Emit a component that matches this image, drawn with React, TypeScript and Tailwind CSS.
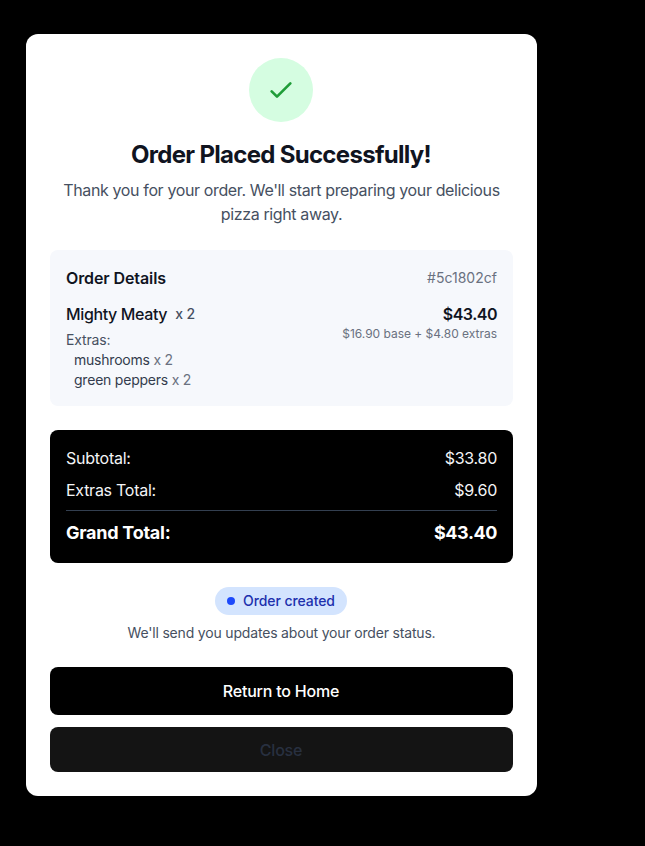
import React from "react";

function Row({ label, value }: { label: string; value: string }) {
  return (
    <div className="flex justify-between text-[#f3f4f6]">
      <span className="tracking-[-0.26px]">{label}</span>
      <span className="tracking-[-0.26px]">{value}</span>
    </div>
  );
}

export default function App() {
  return (
    <div className="h-[846px] w-[645px] overflow-hidden bg-black pl-[26px] pt-[34px] font-['Inter',sans-serif] text-base tracking-[-0.176px]">
      <div className="h-[762px] w-[511px] rounded-xl bg-white p-6">
        <div className="text-center">
          <div className="ml-[199px] flex size-16 items-center justify-center rounded-full bg-[#d5fde1]">
            <svg className="size-8 text-[#1f9d38]" fill="none" stroke="currentColor" strokeWidth="2" strokeLinecap="round" strokeLinejoin="round" viewBox="0 0 24 24">
              <path d="M5 13l4 4L19 7" />
            </svg>
          </div>
          <h2 className="mb-[7px] mt-[17px] pr-px text-2xl font-bold tracking-[-0.7px] text-[#10141f]">Order Placed Successfully!</h2>
          <p className="tracking-[-0.37px] text-[#465061]">Thank you for your order. We'll start preparing your delicious pizza right away.</p>
        </div>

        <div className="mt-6 h-[156px] rounded-lg bg-[#f6f8fc] p-4">
          <div className="mb-3 flex items-center justify-between">
            <h3 className="font-semibold tracking-[-0.1px] text-[#10141f]">Order Details</h3>
            <span className="text-sm tracking-[0.02px] text-[#6a7180]">#5c1802cf</span>
          </div>
          <div className="flex justify-between">
            <div>
              <div className="flex items-center gap-2 font-medium text-[#10141f]">
                <span className="tracking-[-0.37px]">Mighty Meaty</span>
                <span className="text-sm text-[#465061]">x 2</span>
              </div>
              <div className="mt-1 text-sm text-[#465061]">
                <div>Extras:</div>
                <div className="pl-2 tracking-[-0.22px] text-[#6a7180]"><span className="text-[#333c4d]">mushrooms</span> x 2</div>
                <div className="pl-2 tracking-[-0.22px] text-[#6a7180]"><span className="text-[#333c4d]">green peppers</span> x 2</div>
              </div>
            </div>
            <div className="text-right">
              <div className="font-semibold tracking-[-0.5px] text-[#10141f]">$43.40</div>
              <div className="text-xs tracking-[-0.02px] text-[#6a7180]">$16.90 base + $4.80 extras</div>
            </div>
          </div>
        </div>

        <div className="mt-6 h-[133px] rounded-lg bg-black p-4">
          <div className="flex flex-col gap-2">
            <Row label="Subtotal:" value="$33.80" />
            <Row label="Extras Total:" value="$9.60" />
            <div className="flex justify-between border-t border-[#333f50] pt-2 text-lg font-bold tracking-[-0.26px] text-white">
              <span>Grand Total:</span>
              <span className="tracking-[-0.4px]">$43.40</span>
            </div>
          </div>
        </div>

        <div className="mt-6 text-center">
          <div className="ml-[165px] flex h-7 w-[132px] items-center rounded-full bg-[#d3e4fe] px-3 text-sm font-medium tracking-[-0.08px] text-[#1d30ad]">
            <span className="mr-2 size-2 shrink-0 rounded-full bg-[#1c49fb]" />
            <span className="whitespace-nowrap">Order created</span>
          </div>
          <p className="mt-2 text-sm tracking-[-0.18px] text-[#465061]">We'll send you updates about your order status.</p>
        </div>

        <button className="mt-6 block h-12 w-full rounded-lg bg-black pr-px font-medium tracking-[-0.2px] text-white">Return to Home</button>
        <button className="mt-3 block h-[45px] w-full rounded-lg bg-[#141414] pr-px font-medium tracking-[-0.2px] text-[#283040]">Close</button>
      </div>
    </div>
  );
}
